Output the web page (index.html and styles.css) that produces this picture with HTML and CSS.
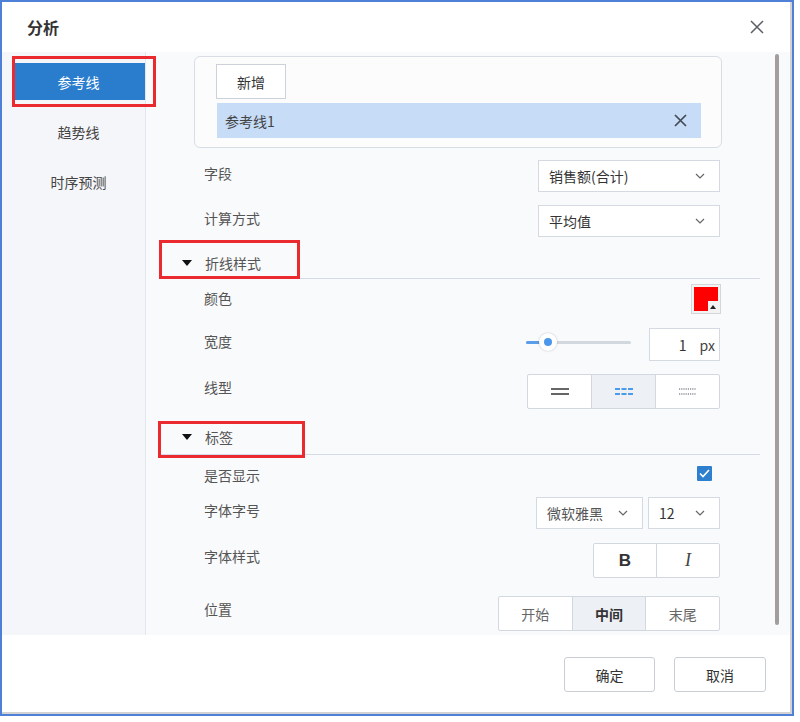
FILE: index.html
```html
<!DOCTYPE html>
<html lang="zh-CN">
<head>
<meta charset="utf-8">
<title>分析</title>
<link rel="stylesheet" href="styles.css">
</head>
<body>
<div class="frame">
  <div class="inner">
    <div class="header">
      <div class="title">分析</div>
      <svg class="close" width="14" height="14" viewBox="0 0 14 14"><path d="M1 1L13 13M13 1L1 13" stroke="#5a5e66" stroke-width="1.5" fill="none"/></svg>
    </div>
    <div class="body">
      <div class="sidebar">
        <div class="nav-item active">参考线</div>
        <div class="nav-item">趋势线</div>
        <div class="nav-item">时序预测</div>
      </div>
      <div class="annot annot-nav"></div>
      <div class="main">
        <div class="scroll">
          <div class="card">
            <div class="btn-add">新增</div>
            <div class="list-item">
              <span>参考线1</span>
              <svg width="13" height="13" viewBox="0 0 13 13"><path d="M1 1L12 12M12 1L1 12" stroke="#444a55" stroke-width="1.7" fill="none"/></svg>
            </div>
          </div>

          <div class="row r1">
            <div class="label">字段</div>
            <div class="select w182"><span>销售额(合计)</span><svg class="chev" width="10" height="6" viewBox="0 0 10 6"><path d="M1 1L5 5L9 1" stroke="#666" stroke-width="1.2" fill="none"/></svg></div>
          </div>
          <div class="row r2">
            <div class="label">计算方式</div>
            <div class="select w182"><span>平均值</span><svg class="chev" width="10" height="6" viewBox="0 0 10 6"><path d="M1 1L5 5L9 1" stroke="#666" stroke-width="1.2" fill="none"/></svg></div>
          </div>

          <div class="section s1">
            <span class="tri"></span><span>折线样式</span>
            <div class="annot annot-s1"></div>
          </div>

          <div class="row r3">
            <div class="label">颜色</div>
            <div class="swatch"><div class="swatch-red"></div><div class="swatch-notch"><span class="up"></span></div></div>
          </div>
          <div class="row r4">
            <div class="label">宽度</div>
            <div class="ctl-group">
              <div class="slider"><div class="fill"></div><div class="knob"><div class="dot"></div></div></div>
              <div class="num"><span class="n">1</span><span class="px">px</span></div>
            </div>
          </div>
          <div class="row r5">
            <div class="label">线型</div>
            <div class="seg w193">
              <div class="cell"><svg width="18" height="7" viewBox="0 0 18 7"><rect x="0" y="0" width="18" height="2" fill="#666"/><rect x="0" y="5" width="18" height="2" fill="#666"/></svg></div>
              <div class="cell on"><svg width="18" height="7" viewBox="0 0 18 7"><g fill="#4b9be8"><rect x="0" y="0" width="5" height="2"/><rect x="6.5" y="0" width="5" height="2"/><rect x="13" y="0" width="5" height="2"/><rect x="0" y="5" width="5" height="2"/><rect x="6.5" y="5" width="5" height="2"/><rect x="13" y="5" width="5" height="2"/></g></svg></div>
              <div class="cell"><svg width="17" height="7" viewBox="0 0 17 7"><g stroke="#8a8e96" stroke-width="1.5" stroke-dasharray="1.2 1" fill="none"><path d="M0 1H17"/><path d="M0 6H17"/></g></svg></div>
            </div>
          </div>

          <div class="section s2">
            <span class="tri"></span><span>标签</span>
            <div class="annot annot-s2"></div>
          </div>

          <div class="row r6">
            <div class="label">是否显示</div>
            <div class="check"><svg width="11" height="9" viewBox="0 0 11 9"><path d="M1 4.5L4 7.5L10 1" stroke="#fff" stroke-width="1.6" fill="none"/></svg></div>
          </div>
          <div class="row r7">
            <div class="label">字体字号</div>
            <div class="ctl-group gap5">
              <div class="select w107 light"><span>微软雅黑</span><svg class="chev" width="10" height="6" viewBox="0 0 10 6"><path d="M1 1L5 5L9 1" stroke="#666" stroke-width="1.2" fill="none"/></svg></div>
              <div class="select w72"><span>12</span><svg class="chev" width="10" height="6" viewBox="0 0 10 6"><path d="M1 1L5 5L9 1" stroke="#666" stroke-width="1.2" fill="none"/></svg></div>
            </div>
          </div>
          <div class="row r8">
            <div class="label">字体样式</div>
            <div class="seg w127">
              <div class="cell bold">B</div>
              <div class="cell ital">I</div>
            </div>
          </div>
          <div class="row r9">
            <div class="label">位置</div>
            <div class="seg w222 text">
              <div class="cell">开始</div>
              <div class="cell on strong">中间</div>
              <div class="cell">末尾</div>
            </div>
          </div>
        </div>
        <div class="gutter"><div class="thumb"></div></div>
      </div>
    </div>
    <div class="footer">
      <div class="btn ok">确定</div>
      <div class="btn cancel">取消</div>
    </div>
  </div>
</div>
</body>
</html>
```
FILE: styles.css
```css
* { box-sizing: border-box; }
html, body { margin: 0; padding: 0; background: #fff; }
body {
  width: 800px;
  height: 722px;
  font-family: "Noto Sans CJK SC", "Noto Sans", sans-serif;
  color: #333;
  font-size: 14px;
}
.frame {
  width: 794px;
  height: 716px;
  border: 2px solid #4d80d6;
  background: #fff;
}
.inner {
  width: 100%;
  height: 100%;
  border-right: 2px solid #d2d2d2;
  border-bottom: 2px solid #d2d2d2;
  display: flex;
  flex-direction: column;
}
.header {
  height: 50px;
  flex: none;
  display: flex;
  align-items: center;
  justify-content: space-between;
  padding: 0 26px 0 25px;
}
.title {
  font-size: 16px;
  font-weight: 700;
  color: #333;
}
.body {
  position: relative;
  height: 583px;
  flex: none;
  display: flex;
  overflow: hidden;
}
.sidebar {
  width: 144px;
  flex: none;
  background: #f4f6f9;
  border-right: 1px solid #e3e7ed;
  padding-top: 11px;
  display: flex;
  flex-direction: column;
  gap: 13px;
}
.nav-item {
  height: 37px;
  margin-left: 12px;
  padding-right: 2px;
  display: flex;
  align-items: center;
  justify-content: center;
  font-size: 14px;
  color: #444;
}
.nav-item.active {
  background: #2a7dcd;
  color: #fff;
}
.annot {
  position: absolute;
  border: 3px solid #ea2a2e;
}
.annot-nav { left: 10px; top: 4px; width: 144px; height: 51px; }
.main {
  flex: 1;
  display: flex;
  background: #f9fafb;
}
.scroll {
  width: 624px;
  flex: none;
}
.gutter {
  flex: 1;
  padding: 2px 0 0 5px;
}
.thumb {
  width: 4px;
  height: 571px;
  background: #a19e9c;
  border-radius: 2px;
}
.card {
  margin: 4px 48px 0 48px;
  height: 92px;
  border: 1px solid #d8dde6;
  border-radius: 6px;
  background: #fcfcfd;
  padding: 7px 0 0 21px;
}
.btn-add {
  width: 70px;
  height: 35px;
  border: 1px solid #cdd2da;
  background: #fff;
  display: flex;
  align-items: center;
  justify-content: center;
  color: #333;
}
.list-item {
  margin: 4px 0 0 1px;
  width: 484px;
  height: 35px;
  background: #c6dcf7;
  display: flex;
  align-items: center;
  justify-content: space-between;
  padding: 0 14px 0 8px;
  color: #444;
}
.row {
  display: flex;
  justify-content: space-between;
  align-items: flex-start;
  padding: 0 50px 0 58px;
}
.label {
  line-height: 26px;
  font-size: 14px;
  color: #555;
}
.r1 { margin-top: 12px; height: 32px; }
.r2 { margin-top: 13px; height: 32px; }
.r3 { margin-top: 6px; height: 29px; }
.r4 { margin-top: 14px; height: 33px; }
.r5 { margin-top: 13px; height: 35px; }
.r6 { margin-top: 7px; height: 26px; }
.r7 { margin-top: 9px; height: 32px; }
.r8 { margin-top: 14px; height: 35px; }
.r9 { margin-top: 18px; height: 35px; }
.select {
  height: 32px;
  border: 1px solid #d5dae2;
  background: #fff;
  display: flex;
  align-items: center;
  justify-content: space-between;
  padding: 0 14px 0 10px;
  font-size: 14px;
  color: #333;
}
.select.light { color: #555; }
.w182 { width: 182px; }
.w107 { width: 107px; }
.w72 { width: 72px; }
.chev { flex: none; }
.section {
  position: relative;
  margin: 0 10px 0 14px;
  padding-left: 22px;
  border-bottom: 1px solid #d6dce7;
  display: flex;
  align-items: center;
  line-height: 20px;
  font-size: 14px;
  color: #555;
}
.s1 { padding-top: 16px; padding-bottom: 5px; }
.s2 { padding-top: 18px; padding-bottom: 7px; }
.tri {
  width: 0;
  height: 0;
  border-left: 5px solid transparent;
  border-right: 5px solid transparent;
  border-top: 6px solid #111;
  margin-right: 13px;
}
.annot-s1 { left: -1px; top: 3px; width: 141px; height: 39px; }
.annot-s2 { left: -2px; top: 12px; width: 147px; height: 37px; }
.swatch {
  position: relative;
  width: 30px;
  height: 30px;
  margin-top: -1px;
  margin-right: -1px;
  border: 1px solid #d3d6db;
  background: #f3f3f3;
  padding: 2px;
}
.swatch-red {
  width: 100%;
  height: 100%;
  background: #ff0000;
}
.swatch-notch {
  position: absolute;
  right: 2px;
  bottom: 2px;
  width: 10px;
  height: 10px;
  background: #f3f3f3;
  display: flex;
  align-items: center;
  justify-content: center;
}
.up {
  width: 0;
  height: 0;
  border-left: 3px solid transparent;
  border-right: 3px solid transparent;
  border-bottom: 4px solid #222;
  margin-top: 2px;
}
.ctl-group {
  display: flex;
  align-items: center;
  gap: 18px;
  height: 100%;
}
.ctl-group.gap5 { gap: 5px; align-items: flex-start; }
.slider {
  position: relative;
  width: 105px;
  height: 3px;
  background: #d3d8df;
  border-radius: 2px;
  margin-top: -5px;
}
.fill {
  width: 16px;
  height: 3px;
  background: #5a9de8;
  border-radius: 2px;
}
.knob {
  position: absolute;
  left: 13px;
  top: -7.5px;
  width: 18px;
  height: 18px;
  border-radius: 50%;
  background: #fff;
  box-shadow: 0 0 2px rgba(0,0,0,0.25);
  display: flex;
  align-items: center;
  justify-content: center;
}
.dot {
  width: 8px;
  height: 8px;
  border-radius: 50%;
  background: #4b97ea;
}
.num {
  width: 71px;
  height: 33px;
  border: 1px solid #d5dae2;
  background: #fff;
  display: flex;
  align-items: center;
  justify-content: flex-end;
  padding-right: 4px;
  font-size: 14px;
  color: #333;
}
.num .n { margin-right: 13px; }
.num .px { color: #444; }
.seg {
  display: flex;
  height: 35px;
  border: 1px solid #d3d8e0;
  border-radius: 2px;
  background: #fff;
}
.w193 { width: 193px; }
.w127 { width: 127px; }
.w222 { width: 222px; }
.cell {
  flex: 1;
  display: flex;
  align-items: center;
  justify-content: center;
  border-left: 1px solid #d3d8e0;
  font-size: 14px;
  color: #666;
}
.cell:first-child { border-left: none; }
.cell.on { background: #edf0f5; }
.cell.strong { font-weight: 700; color: #333; }
.cell.bold {
  font-family: "Liberation Sans", Arial, sans-serif;
  font-weight: 700;
  font-size: 17px;
  color: #333;
}
.cell.ital {
  font-family: "Liberation Serif", "Times New Roman", serif;
  font-style: italic;
  font-size: 18px;
  color: #444;
}
.check {
  width: 15px;
  height: 15px;
  margin-top: 4px;
  margin-right: 8px;
  background: #2f7fcf;
  border-radius: 1px;
  display: flex;
  align-items: center;
  justify-content: center;
}
.footer {
  flex: 1;
  display: flex;
  justify-content: flex-end;
  align-items: flex-start;
  gap: 19px;
  padding: 22px 24px 0 0;
}
.btn {
  height: 35px;
  border: 1px solid #c9ced6;
  border-radius: 3px;
  background: #fff;
  display: flex;
  align-items: center;
  justify-content: center;
  font-size: 14px;
  color: #333;
}
.ok { width: 91px; }
.cancel { width: 92px; }
```
